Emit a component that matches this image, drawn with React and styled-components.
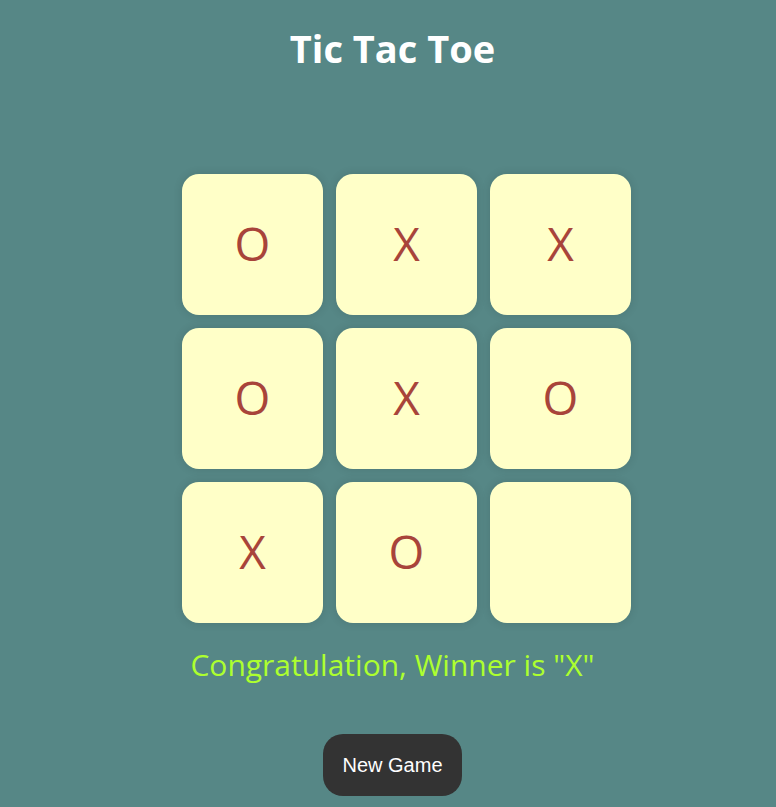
import React, { useState } from "react";
import styled, { createGlobalStyle } from "styled-components";

const GlobalStyle = createGlobalStyle`
  html, body {
    margin: 0;
    padding: 0;
    background-color: #568786;
  }
`;

const startBoard = ["O", "X", "X", "O", "X", "O", "X", "O", ""];

const App = () => {
  const [board] = useState(startBoard);

  return (
    <Wrapper>
      <GlobalStyle />
      <Title>Tic Tac Toe</Title>
      <Board>
        {board.map((value, index) => (
          <Cell key={index}>{value}</Cell>
        ))}
      </Board>
      <Message>Congratulation, Winner is "X"</Message>
      <NewGame>New Game</NewGame>
    </Wrapper>
  );
};

//styled components
const Wrapper = styled.div`
  display: flex;
  flex-direction: column;
  align-items: center;
  min-height: 807px;
  padding-left: 9px;
  box-sizing: border-box;
  font-family: "Open Sans", "Noto Sans", sans-serif;
`;

const Title = styled.h1`
  margin: 22px 0 0;
  font-size: 38px;
  font-weight: 700;
  color: white;
  line-height: 52px;
`;

const Board = styled.div`
  display: grid;
  grid-template-columns: repeat(3, 141px);
  grid-auto-rows: 141px;
  gap: 13px;
  margin-top: 100px;
  margin-left: 28px;
`;

const Cell = styled.div`
  display: flex;
  align-items: center;
  justify-content: center;
  padding-bottom: 4px;
  box-sizing: border-box;
  background-color: #ffffc8;
  border-radius: 17px;
  box-shadow: 0 0 10px rgba(0, 0, 0, 0.12);
  color: #a8443a;
  font-size: 46px;
  cursor: pointer;
`;

const Message = styled.p`
  margin: 22px 0 0;
  font-size: 30px;
  line-height: 40px;
  color: #adff2f;
`;

const NewGame = styled.button`
  margin-top: 49px;
  width: 139px;
  height: 62px;
  border: none;
  border-radius: 20px;
  background-color: #333333;
  color: white;
  font-family: "Liberation Sans", Arial, sans-serif;
  font-size: 20px;
  cursor: pointer;
`;

export default App;
